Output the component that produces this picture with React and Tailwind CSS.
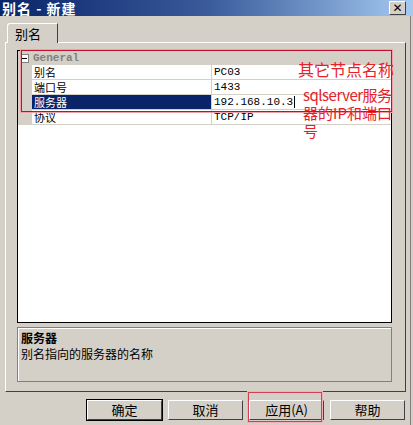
import React from "react";

const cjk = { fontFamily: '"SimSun", "Noto Sans CJK SC", sans-serif' };
const mono = { fontFamily: '"Liberation Mono", "Noto Sans CJK SC", monospace' };
const note = { fontFamily: '"Noto Sans CJK SC", sans-serif' };

const rows = [
  { label: "别名", value: "PC03" },
  { label: "端口号", value: "1433" },
  { label: "服务器", value: "192.168.10.3", selected: true },
  { label: "协议", value: "TCP/IP" },
];

const Button = ({ children, primary }) => (
  <button
    className={`w-[75px] h-[20px] flex items-center justify-center text-[13px] leading-[18px] text-black bg-[#d4d0c8] border-t border-l border-t-white border-l-white border-r border-b border-r-[#404040] border-b-[#404040] ${
      primary ? "outline outline-1 outline-black" : ""
    }`}
  >
    {children}
  </button>
);

export default function App() {
  return (
    <div
      className="relative w-[413px] h-[425px] bg-[#d4d0c8] overflow-hidden text-black"
      style={cjk}
    >
      {/* title bar */}
      <div className="h-[16px] flex items-center justify-between bg-gradient-to-r from-[#0a246a] via-[#3a5a9a] to-[#a6caf0] pl-[2px] pr-[7px]">
        <span className="text-white font-bold text-[14px] leading-[16px] tracking-[1px]">
          别名 - 新建
        </span>
        <div className="w-[17px] h-[14px] bg-[#d4d0c8] border-t border-l border-t-white border-l-white border-r border-b border-r-[#404040] border-b-[#404040] flex items-center justify-center">
          <span className="text-[12px] font-bold leading-[12px]" style={{ fontFamily: '"DejaVu Sans", sans-serif' }}>
            ✕
          </span>
        </div>
      </div>

      {/* tabs */}
      <div className="mt-[7px] pl-[7px] flex">
        <div className="w-[51px] h-[20px] border-t border-l border-r border-t-white border-l-white border-r-[#404040] rounded-tl-[3px] flex items-center pl-[7px] text-[13px] leading-[18px] relative -mb-px bg-[#d4d0c8] z-10">
          别名
        </div>
      </div>

      {/* tab panel */}
      <div className="ml-[5px] w-[401px] h-[350px] border-t border-l border-t-white border-l-white border-r border-b border-r-[#404040] border-b-[#404040] pt-[7px] pl-[11px]">
        {/* property grid */}
        <div className="w-[375px] h-[273px] border border-black bg-white flex flex-col">
          <div className="h-[14px] bg-[#d4d0c8] flex items-center">
            <div className="w-[9px] h-[9px] border border-[#808080] bg-white ml-[2px] flex items-center justify-center">
              <div className="w-[5px] h-px bg-black" />
            </div>
            <span className="ml-[4px] text-[11px] font-bold text-[#808080] leading-[14px]" style={mono}>
              General
            </span>
          </div>
          {rows.map((r) => (
            <div key={r.label} className="h-[15px] flex border-b border-[#d4d0c8] overflow-hidden">
              <div className="w-[14px] bg-[#d4d0c8]" />
              <div
                className={`w-[180px] pl-[2px] flex items-center text-[11px] leading-[13px] border-r border-[#d4d0c8] ${
                  r.selected ? "bg-[#0a246a] text-white" : ""
                }`}
              >
                {r.label}
              </div>
              <div className="flex-1 pl-[2px] flex items-center text-[11px] leading-[13px]" style={mono}>
                {r.value}
                {r.selected && <span className="w-px h-[12px] bg-black ml-px" />}
              </div>
            </div>
          ))}
        </div>

        {/* description */}
        <div className="mt-[4px] w-[375px] h-[55px] border border-[#808080] shadow-[inset_1px_1px_0_white] px-[3px] pt-[2px]">
          <div className="text-[12px] font-bold leading-[16px]">服务器</div>
          <div className="text-[12px] leading-[16px]">别名指向的服务器的名称</div>
        </div>
      </div>

      {/* buttons */}
      <div className="mt-[8px] flex gap-[6px] pl-[87px]">
        <Button primary>确定</Button>
        <Button>取消</Button>
        <Button>应用(A)</Button>
        <Button>帮助</Button>
      </div>

      {/* window frame edge */}
      <div className="absolute top-[16px] right-[2px] w-px h-[409px] bg-[#808080]" />

      {/* annotations */}
      <div className="absolute left-[21px] top-[50px] w-[371px] h-[62px] border border-[#c0102a] shadow-[0_0_0_1px_#f2a0a8]" />
      <div className="absolute left-[248px] top-[392px] w-[74px] h-[30px] border border-[#d04050] shadow-[0_0_0_1px_#f2b0b8]" />
      <div className="absolute left-[298px] top-[60px] text-[16px] leading-[18px] text-[#e8202a] whitespace-nowrap" style={note}>
        其它节点名称
      </div>
      <div className="absolute left-[303px] top-[86px] text-[15px] leading-[18px] text-[#e8202a] whitespace-nowrap" style={note}>
        <div className="tracking-[-0.5px]">sqlserver服务</div>
        <div>器的IP和端口</div>
        <div>号</div>
      </div>
    </div>
  );
}
